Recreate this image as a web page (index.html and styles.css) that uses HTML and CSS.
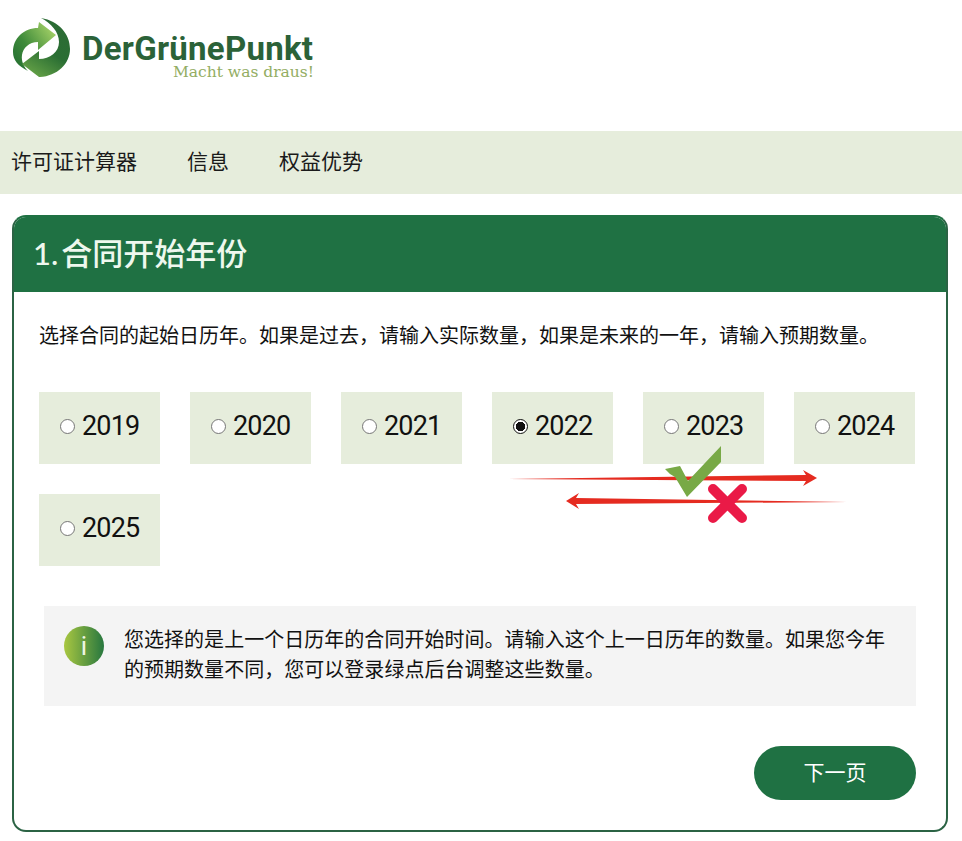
FILE: index.html
```html
<!DOCTYPE html>
<html lang="zh-CN">
<head>
<meta charset="utf-8">
<title>许可证计算器</title>
<link rel="stylesheet" href="styles.css">
</head>
<body>
<header class="top">
  <div class="logo">
    <svg class="logo-mark" viewBox="0 0 60 60" width="60" height="60" aria-hidden="true">
      <defs>
        <linearGradient id="lg1" x1="0" y1="1" x2="1" y2="0.2">
          <stop offset="0" stop-color="#1f6a30"/><stop offset="0.45" stop-color="#3f8b3a"/><stop offset="1" stop-color="#a6d268"/>
        </linearGradient>
        <linearGradient id="lg2" x1="0.8" y1="0" x2="0.3" y2="1">
          <stop offset="0" stop-color="#2c6b35"/><stop offset="0.55" stop-color="#2a6e33"/><stop offset="1" stop-color="#63a046"/>
        </linearGradient>
      </defs>
      <path d="M16 53C6 48 1 42 1 34C1 20 12 10 26 10L27 4L44 17L26 32L26 24C17 24 11 30 10 37C9 43 12 49 16 53Z" fill="url(#lg1)"/>
      <path d="M29 0C47 3 58 16 58 31C58 46 45 58 28 59L27 59L10 46L27 33L27 41C38 41 47 34 47 24C47 14 39 5 29 0Z" fill="url(#lg2)"/>
    </svg>
    <div class="logo-text">
      <div class="logo-name">DerGrünePunkt</div>
      <div class="logo-tag">Macht was draus!</div>
    </div>
  </div>
</header>
<nav class="nav">
  <a class="nav-link">许可证计算器</a>
  <a class="nav-link">信息</a>
  <a class="nav-link">权益优势</a>
</nav>
<main class="card">
  <h1 class="card-title"><span class="num">1.</span>合同开始年份</h1>
  <div class="card-body">
    <p class="lead">选择合同的起始日历年。如果是过去，请输入实际数量，如果是未来的一年，请输入预期数量。</p>
    <div class="years">
      <label class="year"><span class="radio"></span>2019</label>
      <label class="year"><span class="radio"></span>2020</label>
      <label class="year"><span class="radio"></span>2021</label>
      <label class="year"><span class="radio on"></span>2022</label>
      <label class="year"><span class="radio"></span>2023</label>
      <label class="year"><span class="radio"></span>2024</label>
      <label class="year"><span class="radio"></span>2025</label>
    </div>
    <svg class="marks" viewBox="0 0 350 90" width="350" height="90" aria-hidden="true">
      <path d="M-1 34L300 30L297 25L311 33L297 41L300 36Z" fill="#e52b20"/>
      <path d="M341 57L70 53L73 48L60 56L73 64L70 59Z" fill="#e52b20"/>
      <path d="M159 24L174 21L182 36L215 1L215 17L181 52L169 32L164 29Z" fill="#78a946"/>
      <path d="M207 44L236 73M236 44L207 73" stroke="#ea1a47" stroke-width="10" stroke-linecap="round" fill="none"/>
    </svg>
    <div class="info">
      <span class="info-icon">i</span>
      <p class="info-text">您选择的是上一个日历年的合同开始时间。请输入这个上一日历年的数量。如果您今年的预期数量不同，您可以登录绿点后台调整这些数量。</p>
    </div>
    <div class="actions">
      <a class="next">下一页</a>
    </div>
  </div>
</main>
</body>
</html>
```

FILE: styles.css
```css
* { box-sizing: border-box; }
html, body { margin: 0; padding: 0; }
body {
  width: 962px;
  height: 841px;
  overflow: hidden;
  background: #fff;
  color: #111;
  font-family: "Noto Sans CJK SC", "Liberation Sans", sans-serif;
}
.top { height: 131px; padding: 18px 0 0 12px; }
.logo { display: flex; align-items: flex-start; gap: 10px; }
.logo-mark { display: block; flex: none; }
.logo-text { width: 232px; padding-top: 14px; }
.logo-name {
  font-family: "Roboto", sans-serif;
  font-weight: 700;
  font-size: 33px;
  line-height: 34px;
  letter-spacing: 0.27px;
  color: #2b6238;
  white-space: nowrap;
}
.logo-tag {
  font-family: "DejaVu Serif", serif;
  font-size: 15.500px;
  line-height: 14px;
  margin-top: -1px;
  text-align: right;
  color: #93ad63;
  white-space: nowrap;
}
.nav {
  height: 63px;
  background: #e6eddc;
  display: flex;
  align-items: center;
  gap: 50px;
  padding: 0 0 5px 11px;
}
.nav-link { font-size: 21px; line-height: 28px; color: #1a1a1a; }
.card {
  margin: 21px 14px 0 12px;
  height: 617px;
  border: 2px solid #2b6344;
  border-top-color: #1f7143;
  border-radius: 14px;
  overflow: hidden;
}
.card-title {
  margin: -2px -2px 0;
  height: 77px;
  background: #1f7143;
  color: #eef8ee;
  font-size: 31px;
  font-weight: 500;
  line-height: 73px;
  padding-left: 21px;
}
.num { font-family: "Lato", sans-serif; margin-right: 3px; }
.card-body { position: relative; padding: 28px 30px 0 25px; }
.lead { margin: 0; font-size: 20px; line-height: 30px; white-space: nowrap; }
.years {
  display: flex;
  flex-wrap: wrap;
  gap: 30px;
  margin-top: 42px;
  width: 880px;
}
.year {
  width: 121px;
  height: 72px;
  background: #e6eddc;
  display: flex;
  align-items: center;
  gap: 7px;
  padding: 0 0 5px 21px;
  font-family: "Roboto", sans-serif;
  font-size: 27px;
  letter-spacing: -0.8px;
  color: #111;
}
.radio {
  width: 15px;
  height: 15px;
  flex: none;
  margin-top: 1px;
  border-radius: 50%;
  border: 1px solid #767676;
  background: #fff;
}
.radio.on {
  border: 1.500px solid #111;
  background: radial-gradient(circle, #111 0 4.500px, #fff 5px);
}
.marks { position: absolute; left: 492px; top: 153px; }
.info {
  display: flex;
  gap: 20px;
  margin: 40px 0 0 5px;
  width: 872px;
  height: 100px;
  padding: 20px 20px 0;
  background: #f4f4f4;
}
.info-icon {
  flex: none;
  width: 40px;
  height: 40px;
  border-radius: 50%;
  background: linear-gradient(90deg, #a9c741, #27773f);
  color: #eef6e4;
  font-family: "Roboto", sans-serif;
  font-size: 26px;
  line-height: 40px;
  text-align: center;
}
.info-text { margin: -2px 0 0; font-size: 20px; line-height: 30px; letter-spacing: 0.03px; }
.actions { display: flex; justify-content: flex-end; margin-top: 40px; width: 877px; }
.next {
  width: 162px;
  height: 54px;
  border-radius: 27px;
  background: #1f7143;
  color: #fff;
  font-size: 21px;
  font-weight: 400;
  line-height: 51px;
  text-align: center;
}
```
